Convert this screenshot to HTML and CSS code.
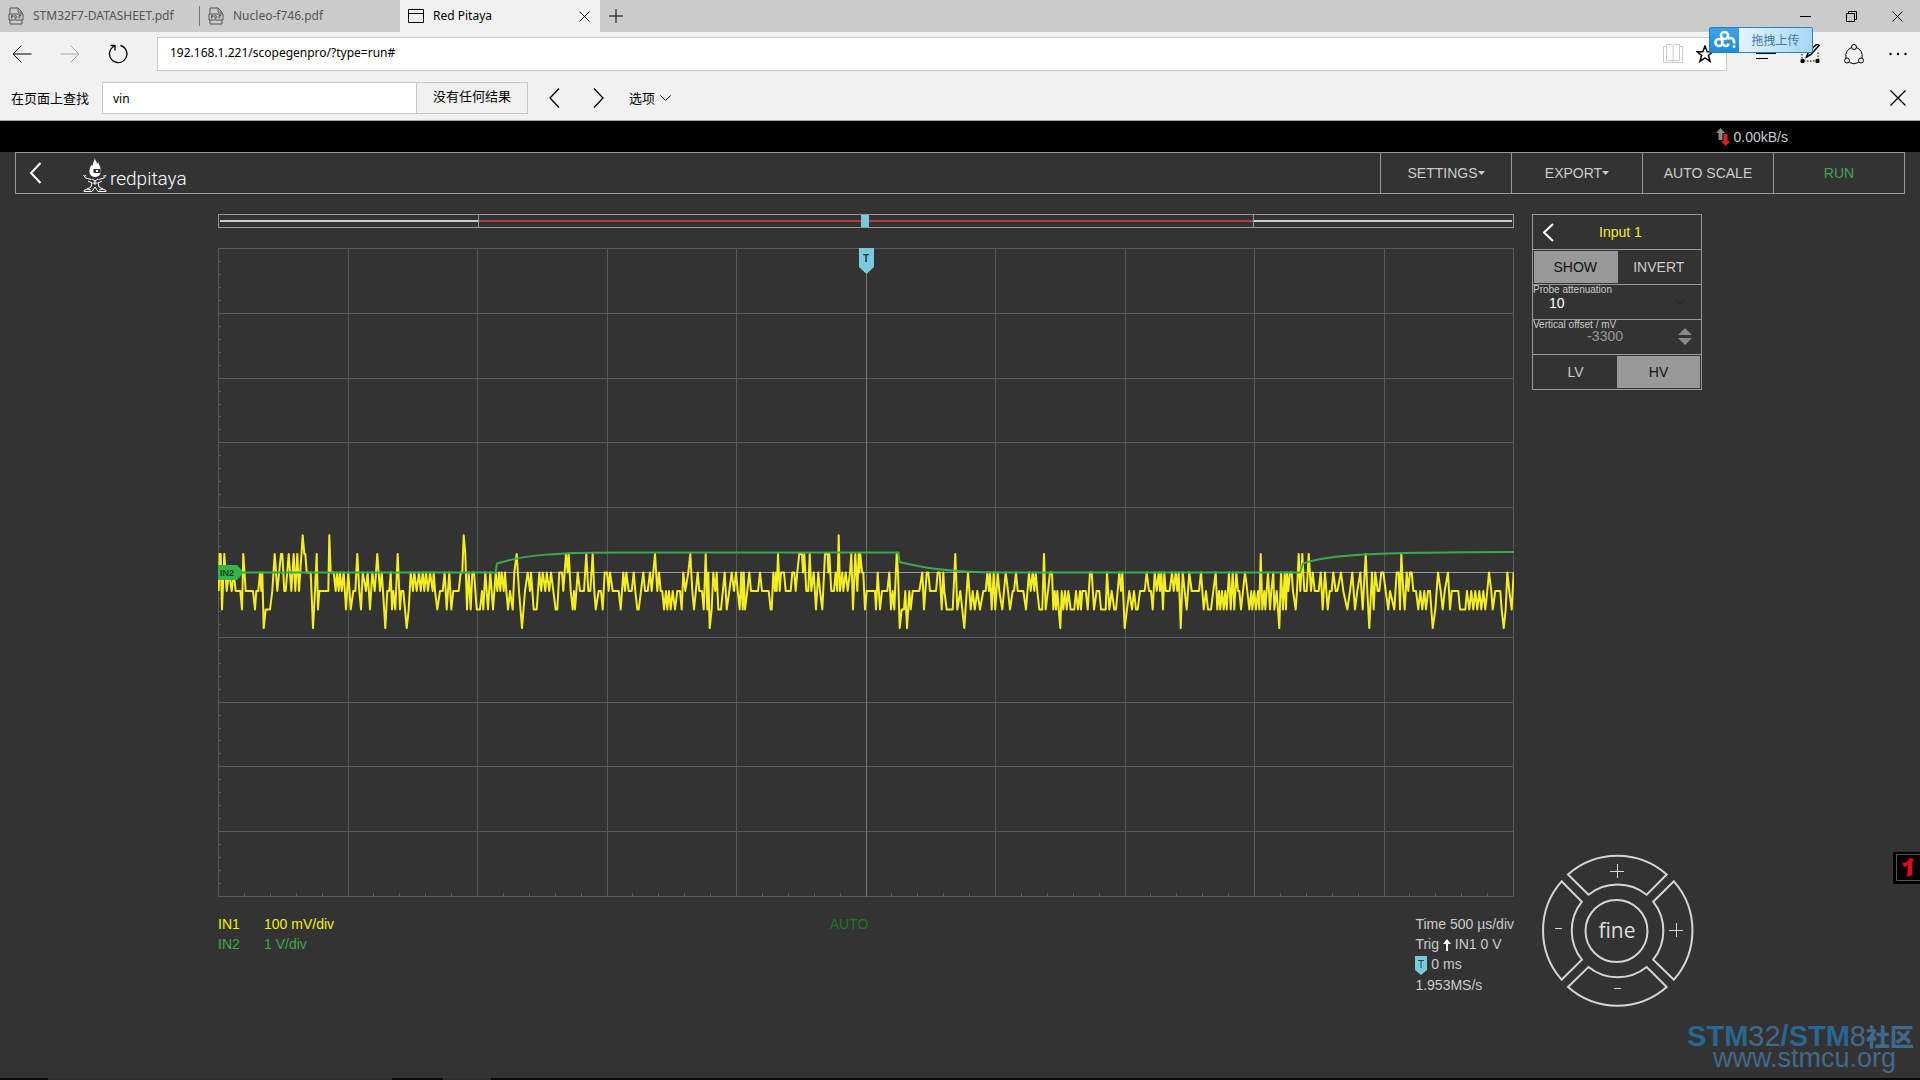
FILE: index.html
```html
<!DOCTYPE html>
<html lang="zh-CN">
<head>
    <meta charset="UTF-8">
    <meta name="viewport" content="width=device-width, initial-scale=1.0">
    <title>Red Pitaya</title>
    <link rel="stylesheet" href="styles.css">
</head>
<body>
    <div class="browser">
        <div class="tabs">
            <button class="tab">
                <svg class="icon" width="16" height="18" viewBox="0 0 16 18"><path d="M2 7V1h8l4 4v2M2 13v4h12v-4M10 1v4h4M1 7h14v6H1z"/><path d="M3.500 11.500v-3h1.500v1.500h-1.500M7 8.500v3c2.500 0 2.500-3 0-3M11 11.500v-3h2M11 10h1.500"/></svg>
                <span>STM32F7-DATASHEET.pdf</span>
            </button>
            <button class="tab">
                <svg class="icon" width="16" height="18" viewBox="0 0 16 18"><path d="M2 7V1h8l4 4v2M2 13v4h12v-4M10 1v4h4M1 7h14v6H1z"/><path d="M3.500 11.500v-3h1.500v1.500h-1.500M7 8.500v3c2.500 0 2.500-3 0-3M11 11.500v-3h2M11 10h1.500"/></svg>
                <span>Nucleo-f746.pdf</span>
            </button>
            <button class="tab active">
                <svg class="icon" width="16" height="14" viewBox="0 0 16 14"><path d="M.5.500h15v13H.5zM.5 4.500h15"/></svg>
                <span>Red Pitaya</span>
                <svg class="icon tab-close" width="11" height="11" viewBox="0 0 11 11"><path d="M.5.500l10 10M10.500.500l-10 10"/></svg>
            </button>
            <button class="new-tab" aria-label="New tab"><svg class="icon" width="14" height="14" viewBox="0 0 14 14"><path d="M7 0v14M0 7h14"/></svg></button>
            <div class="window-buttons">
                <button aria-label="Minimize"><svg class="icon" width="11" height="11" viewBox="0 0 11 11"><path d="M0 5.500h11"/></svg></button>
                <button aria-label="Restore"><svg class="icon" width="11" height="11" viewBox="0 0 11 11"><path d="M.5 2.500h8v8h-8zM2.500 2.500v-2h8v8h-2"/></svg></button>
                <button aria-label="Close"><svg class="icon" width="11" height="11" viewBox="0 0 11 11"><path d="M.5.500l10 10M10.500.500l-10 10"/></svg></button>
            </div>
        </div>

        <div class="nav">
            <button class="nav-btn" aria-label="Back"><svg class="icon" width="20" height="18" viewBox="0 0 20 18"><path d="M9.500.500L1 9l8.500 8.500M1 9h18.500"/></svg></button>
            <button class="nav-btn" aria-label="Forward" disabled><svg class="icon" width="20" height="18" viewBox="0 0 20 18"><path d="M10.500.500L19 9l-8.500 8.500M19 9H.5"/></svg></button>
            <button class="nav-btn" aria-label="Refresh"><svg class="icon" width="20" height="20" viewBox="0 0 20 20"><path stroke-width="1.300" d="M12.500 1.500a8.700 8.700 0 1 1-6 .5M2.500 1.500h4.500v5"/></svg></button>
            <div class="address">
                <input type="text" aria-label="Address" value="192.168.1.221/scopegenpro/?type=run#">
                <button class="reader" aria-label="Reading view"><svg class="icon" width="20" height="20" viewBox="0 0 20 20"><path d="M.5 2.500h3v-2h5.500l1 1 1-1h5.500v2h3v16H.5zM3.500 2.500v14h13v-14M10 1.500V18"/></svg></button>
                <button aria-label="Favorite"><svg class="icon" width="18" height="18" viewBox="0 0 18 18"><path stroke-width="1.500" d="M9 1l2.200 5.700H17l-4.600 3.700 1.700 6L9 12.900l-5.100 3.500 1.700-6L1 6.700h5.800z"/></svg></button>
            </div>
            <div class="nav-tools">
                <button aria-label="Hub"><svg class="icon" width="20" height="20" viewBox="0 0 20 20"><path d="M0 4.500h20M0 9.500h20M0 14.500h12"/></svg></button>
                <button aria-label="Web note"><svg class="icon" width="20" height="20" viewBox="0 0 20 20"><path stroke-dasharray="1.500 1.500" d="M2 4v13h16V7"/><path fill="currentColor" d="M1 15.500h3v3H1zM16 15.500h3v3h-3z"/><path stroke-width="1.500" d="M6.500 13l2-5L17 0l2 1.500-8 9z"/></svg></button>
                <button aria-label="Share"><svg class="icon" width="20" height="21" viewBox="0 0 20 21"><circle cx="10" cy="3" r="2.500"/><circle cx="3" cy="16.500" r="2.500"/><circle cx="17" cy="16.500" r="2.500"/><path d="M7.500 3.500A9 9 0 0 0 2 14M12.500 3.500A9 9 0 0 1 18 14M5.500 18.500a9 9 0 0 0 9 0"/></svg></button>
                <button aria-label="More"><svg class="icon dots" width="18" height="4" viewBox="0 0 18 4"><circle cx="1.500" cy="2" r="1.200"/><circle cx="9" cy="2" r="1.200"/><circle cx="16.500" cy="2" r="1.200"/></svg></button>
            </div>
            <button class="upload">
                <svg width="29" height="24" viewBox="0 0 29 24"><g fill="none" stroke="#fff" stroke-width="2.600"><circle cx="14.500" cy="7.500" r="3.500"/><circle cx="9" cy="14.500" r="3.500"/><path d="M13 16c1.500 3 5 2.500 5.500-.5M17.500 10.500c4-1.500 7 0 6.500 5"/></g><circle cx="24" cy="18.500" r="1.400" fill="#fff"/></svg>
                <span>拖拽上传</span>
            </button>
        </div>

        <div class="find">
            <label for="find-text">在页面上查找</label>
            <input type="text" id="find-text" value="vin">
            <span class="find-result">没有任何结果</span>
            <button class="find-btn" aria-label="Previous"><svg class="icon" width="11" height="20" viewBox="0 0 11 20"><path stroke-width="1.300" d="M10 .5L1 10l9 9.500"/></svg></button>
            <button class="find-btn" aria-label="Next"><svg class="icon" width="11" height="20" viewBox="0 0 11 20"><path stroke-width="1.300" d="M1 .5l9 9.500-9 9.500"/></svg></button>
            <button class="find-options">选项 <svg class="icon" width="11" height="6" viewBox="0 0 11 6"><path d="M.5.500l5 5 5-5"/></svg></button>
            <button class="find-close" aria-label="Close"><svg class="icon" width="16" height="16" viewBox="0 0 16 16"><path stroke-width="1.300" d="M.5.500l15 15M15.500.500l-15 15"/></svg></button>
        </div>
    </div>

    <div class="speed">
        <svg width="14" height="18" viewBox="0 0 14 18"><path fill="#888" d="M4.500 0L9 5H6.500v7h-4V5H0z"/><path fill="#e02020" d="M7.500 6h4v7H14l-4.500 5L5 13h2.500z"/></svg>
        <span>0.00kB/s</span>
    </div>

    <header class="menu">
        <a class="back" href="#" aria-label="Back"><svg width="13" height="22" viewBox="0 0 13 22"><path d="M11.500 1L2 11l9.500 10"/></svg></a>
        <a class="logo" href="#">
            <svg width="24" height="34" viewBox="0 0 24 34">
                <path fill="#fff" d="M12 0c0 3 2 3 2 6l1.500-2c0 3 2 4 2 7 1 5-1.500 8-5.500 8s-6-3-5.500-7c0-2 1.500-3 1.500-5l1.500 1c0-3 2-5 2.500-8z"/>
                <path fill="#333" d="M10.500 11h7v4h-7z"/><path fill="#fff" d="M13 12h2v2h-2z"/>
                <path fill="none" stroke="#fff" d="M.5 17l2 3 6 1.500M23 17l-2 3-5.500 1.500M2 17l1 1.500M21.500 17l-1 1.500M5 23l4 2-1 4-7 3.500v1h8l3-4.500 3 4.500h8v-1L16 29l-1-4 4-2M9 21l3 2 3-2M12 23v4M9.500 25h5M4 31l4 1M20 31l-4 1"/>
            </svg>
            <span>redpitaya</span>
        </a>
        <button class="menu-btn">SETTINGS<svg width="7" height="4" viewBox="0 0 7 4"><path d="M0 0h7L3.500 4z"/></svg></button>
        <button class="menu-btn">EXPORT<svg width="7" height="4" viewBox="0 0 7 4"><path d="M0 0h7L3.500 4z"/></svg></button>
        <button class="menu-btn">AUTO SCALE</button>
        <button class="menu-btn run">RUN</button>
    </header>

    <main class="scope">
        <section class="plot">
            <div class="buffer">
                <div class="buffer-window"></div>
                <div class="buffer-pos"></div>
            </div>

            <svg class="graph" viewBox="0 0 1296 649">
                <g id="grid" shape-rendering="crispEdges"></g>
                <path class="axis-x" d="M0 324.500h1296"/>
                <path class="axis-y" d="M648.500 0v649"/>
                <polyline id="in1" class="in1-line"/>
                <path class="in2-line" d="M0 324.500H277.500L279 315.500C305 307 340 304 412 304.500H680.500L681.500 314C705 320 735 324.500 780 324.500H1082L1085 315.500C1110 307 1150 304 1296 304"/>
                <path class="in2-tag" d="M0 317h19l7 7.500-7 7.500H0z"/>
                <text class="in2-text" x="2" y="328">IN2</text>
                <path class="trig-tag" d="M641 0h15v19l-7.500 7L641 19z"/>
                <text class="trig-text" x="648" y="14">T</text>
            </svg>

            <div class="info">
                <div class="channels">
                    <div class="in1"><span>IN1</span>100 mV/div</div>
                    <div class="in2"><span>IN2</span>1 V/div</div>
                </div>
                <div class="mode">AUTO</div>
                <div class="timing">
                    <div>Time 500 µs/div</div>
                    <div>Trig <svg width="8" height="12" viewBox="0 0 8 12"><path fill="#fff" d="M4 0l4 5H5v7H3V5H0z"/></svg> IN1 0 V</div>
                    <div><svg width="12" height="19" viewBox="0 0 12 19"><path fill="#77cbdd" d="M0 0h12v14l-6 5-6-5z"/><path stroke="#245" d="M3 4.500h6M6 4.500V12"/></svg> 0 ms</div>
                    <div>1.953MS/s</div>
                </div>
            </div>
        </section>

        <aside class="side">
            <form class="panel">
                <div class="panel-title">
                    <button type="button" aria-label="Back"><svg width="11" height="19" viewBox="0 0 11 19"><path d="M10 1L1 9.500l9 8.500"/></svg></button>
                    <h2>Input 1</h2>
                </div>
                <div class="panel-row">
                    <button type="button" class="on">SHOW</button>
                    <button type="button">INVERT</button>
                </div>
                <div class="panel-field">
                    <label for="probe">Probe attenuation</label>
                    <select id="probe"><option>1</option><option selected>10</option></select>
                    <svg class="arrow" width="10" height="6" viewBox="0 0 10 6"><path d="M0 0l5 5 5-5"/></svg>
                </div>
                <div class="panel-field">
                    <label for="offset">Vertical offset / mV</label>
                    <input type="text" id="offset" value="-3300">
                    <svg class="spin" width="14" height="17" viewBox="0 0 14 17"><path d="M7 0l7 7H0zM7 17l7-7H0z"/></svg>
                </div>
                <div class="panel-row">
                    <button type="button">LV</button>
                    <button type="button" class="on">HV</button>
                </div>
            </form>

            <div class="wheel">
                <svg class="wheel-art" viewBox="0 0 150 151">
                    <path d="M26 19.500A74.500 74.500 0 0 1 124.700 19.500L104.700 39.700A46.500 46.500 0 0 0 46.500 39.700z"/>
                    <path d="M131.900 26.300A74.500 74.500 0 0 1 131.900 124.700L111.200 104.700A46.500 46.500 0 0 0 111.200 46.700z"/>
                    <path d="M26 132A74.500 74.500 0 0 0 124.700 132L104.700 112A46.500 46.500 0 0 1 46.500 112z"/>
                    <path d="M19.600 26.300A74.500 74.500 0 0 0 19.600 124.700L39.900 104.700A46.500 46.500 0 0 1 39.900 46.700z"/>
                    <circle cx="74.500" cy="76" r="31"/>
                </svg>
                <button class="up" aria-label="Scale Y up"><svg width="14" height="14" viewBox="0 0 14 14"><path d="M7.500 0v14M0 7.500h14"/></svg></button>
                <button class="left" aria-label="Scale X down"><svg width="7" height="5" viewBox="0 0 7 5"><path d="M0 1.500h7"/></svg></button>
                <button class="fine">fine</button>
                <button class="right" aria-label="Scale X up"><svg width="14" height="14" viewBox="0 0 14 14"><path d="M7.500 0v14M0 7.500h14"/></svg></button>
                <button class="down" aria-label="Scale Y down"><svg width="7" height="5" viewBox="0 0 7 5"><path d="M0 2.500h7"/></svg></button>
            </div>
        </aside>
    </main>

    <footer class="watermark">
        <div class="watermark-name"><b>STM</b>32<b>/STM</b>8<b class="cn">社区</b></div>
        <div class="watermark-url">www.stmcu.org</div>
    </footer>

    <div class="taskbar"><span></span><span></span></div>

    <div class="counter">
        <svg width="27" height="32" viewBox="0 0 27 32"><path fill="#000" d="M0 0h27v32H0z"/><path fill="none" stroke="#555" d="M27 2.500H3.500v26H27"/><path fill="#f00610" d="M9 11c4 0 6-2 8-5l4 1-2 3v13l-5 2 1-12-4 2z"/></svg>
    </div>

    <script src="script.js"></script>
</body>
</html>
```
FILE: styles.css
```css
:root {
    --fundal: #333;
    --bar: #f1f1f1;
    --line: #999;
    --text: #ccc;
    --galben: #f5ee1e;
    --verde: #3ea84f;
    --cyan: #77cbdd;
}

* {
    box-sizing: border-box;
}

body {
    margin: 0;
    min-height: 100vh;
    display: flex;
    flex-direction: column;
    background: var(--fundal);
    color: var(--text);
    font: 14px/20px "Liberation Sans", Arial, sans-serif;
}

button, input, select {
    font: inherit;
    color: inherit;
    background: none;
    border: none;
    border-radius: 0;
    padding: 0;
    margin: 0;
}

button {
    display: flex;
    align-items: center;
    justify-content: center;
}

a {
    color: inherit;
    text-decoration: none;
}

svg {
    flex: none;
}

/* browser chrome */
.browser {
    background: var(--bar);
    color: #000;
    font: 12px/18px "Noto Sans", "Noto Sans CJK SC", sans-serif;
    border-bottom: 1px solid #aaa;
}

.icon {
    fill: none;
    stroke: currentColor;
}

.tabs {
    display: flex;
    height: 32px;
    background: #cbcbcb;
}

.tab {
    width: 200px;
    padding: 0 10px 0 8px;
    gap: 9px;
    justify-content: flex-start;
    color: #555;
}

.tab:first-child {
    background: linear-gradient(#777, #777) right center / 1px 20px no-repeat;
}

.tab.active {
    background: var(--bar);
    color: #000;
}

.tab-close {
    margin-left: auto;
}

.new-tab {
    width: 32px;
}

.window-buttons {
    display: flex;
    margin-left: auto;
}

.window-buttons button {
    width: 46px;
}

.nav {
    position: relative;
    display: flex;
    align-items: center;
    padding-top: 5px;
}

.nav-btn {
    width: 48px;
    padding-right: 4px;
}

.nav-btn:disabled {
    color: #aaa;
}

.address {
    flex: 1;
    display: flex;
    height: 34px;
    margin-left: 13px;
    padding: 0 5px 0 12px;
    background: #fff;
    border: 1px solid #c8c8c8;
}

.address input {
    flex: 1;
    height: 28px;
}

.address button {
    width: 32px;
}

.address .reader {
    color: #ccc;
}

.nav-tools {
    display: flex;
    padding-left: 17px;
}

.nav-tools button {
    width: 44px;
    height: 34px;
}

.dots {
    fill: currentColor;
    stroke: none;
}

.upload {
    position: absolute;
    right: 107px;
    top: -5px;
    width: 104px;
    height: 26px;
    border: 1px solid #2b7fbd;
    border-radius: 2px;
    background: linear-gradient(#3ba3ea, #1f8edb);
    color: #47759b;
    font-family: "Noto Sans CJK SC", sans-serif;
}

.upload span {
    flex: 1;
    line-height: 24px;
    background: linear-gradient(100deg, #e4f5ff, #a4d6f7);
}

.find {
    display: flex;
    align-items: center;
    padding: 11px 14px 6px 11px;
    font-size: 13px;
}

.find input {
    width: 315px;
    height: 32px;
    margin-left: 13px;
    padding: 0 10px;
    font-size: 12px;
    background: #fff;
    border: 1px solid #c8c8c8;
}

.find-result {
    width: 111px;
    height: 32px;
    line-height: 26px;
    text-align: center;
    border: 1px solid #c8c8c8;
    border-left: none;
}

.find-btn {
    width: 44px;
    height: 32px;
}

.find-result + .find-btn {
    margin-left: 4px;
}

.find-options {
    margin-left: 9px;
    gap: 5px;
}

.find-close {
    margin-left: auto;
}

/* network speed strip */
.speed {
    display: flex;
    justify-content: flex-end;
    align-items: center;
    gap: 4px;
    height: 31px;
    padding-right: 132px;
    background: #000;
}

/* scope header */
.menu {
    display: flex;
    height: 42px;
    margin: 0 15px;
    border: 1px solid var(--line);
}

.back, .logo {
    display: flex;
    align-items: center;
}

.back {
    padding-left: 13px;
    fill: none;
    stroke: #fff;
    stroke-width: 2;
}

.logo {
    margin-left: 41px;
    margin-right: auto;
    gap: 3px;
    color: #fff;
    font: 300 19px/22px Roboto, sans-serif;
    padding-top: 4px;
}

.logo span {
    padding-top: 8px;
}

.menu-btn {
    width: 131px;
    border-left: 1px solid var(--line);
}

.menu-btn svg {
    fill: currentColor;
}

.menu-btn.run {
    color: var(--verde);
}

/* graph and side panel */
.scope {
    display: grid;
    grid-template-columns: minmax(0, 1fr) 170px;
    gap: 18px;
    padding: 20px 218px 0;
}

.buffer {
    position: relative;
    height: 14px;
    margin-bottom: 20px;
    border: 1px solid var(--line);
    background: linear-gradient(#ccc, #ccc) center / calc(100% - 2px) 2px no-repeat;
}

.buffer-window {
    height: 12px;
    margin: 0 20%;
    border: solid var(--line);
    border-width: 0 1px;
    background: linear-gradient(#b04040, #b04040) center / 100% 2px no-repeat, var(--fundal);
}

.buffer-pos {
    position: absolute;
    top: 0;
    left: calc(50% - 5px);
    width: 8px;
    height: 12px;
    background: var(--cyan);
}

.graph {
    display: block;
    width: 100%;
}

.grid-line {
    stroke: #5a5a5a;
}

.axis-x {
    stroke: #999;
}

.axis-y {
    stroke: #777;
}

.in1-line, .in2-line {
    fill: none;
    stroke-width: 2;
    stroke-linejoin: round;
}

.in1-line {
    stroke: var(--galben);
}

.in2-line {
    stroke: var(--verde);
}

.in2-tag {
    fill: #34b44a;
}

.in2-text {
    font: bold 9px "Liberation Sans", Arial, sans-serif;
    fill: #16401d;
}

.trig-tag {
    fill: var(--cyan);
}

.trig-text {
    font: bold 10px "Liberation Sans", Arial, sans-serif;
    text-anchor: middle;
    fill: #234;
}

.info {
    display: grid;
    grid-template-columns: 1fr auto 1fr;
    padding: 17px 0 10px;
}

.channels span {
    display: inline-block;
    width: 46px;
}

.in1 {
    color: var(--galben);
}

.in2 {
    color: var(--verde);
}

.mode {
    padding-right: 34px;
    color: #1c7a1c;
}

.timing {
    justify-self: end;
}

.timing svg {
    vertical-align: middle;
}

.side {
    display: flex;
    flex-direction: column;
    justify-content: space-between;
}

.panel {
    border: 1px solid var(--line);
}

.panel > div {
    height: 35px;
    border-bottom: 1px solid var(--line);
}

.panel > div:last-child {
    height: 34px;
    border-bottom: none;
}

.panel-title {
    display: flex;
    align-items: center;
}

.panel-title button {
    padding-left: 10px;
    fill: none;
    stroke: #fff;
    stroke-width: 2;
}

.panel-title h2 {
    flex: 1;
    margin: 0;
    padding-right: 14px;
    text-align: center;
    font: inherit;
    color: var(--galben);
}

.panel-row {
    display: flex;
    padding: 1px;
}

.panel-row button {
    flex: 1;
}

.panel-row .on {
    background: #999;
    color: #111;
}

.panel-row .on + button {
    border-left: 1px solid var(--line);
}

.panel-field {
    position: relative;
}

.panel-field label {
    display: block;
    font-size: 10px;
    line-height: 10px;
}

.panel-field select {
    appearance: none;
    display: block;
    width: 100%;
    padding-left: 16px;
    line-height: 16px;
    color: #fff;
}

.panel-field select option {
    background: var(--fundal);
}

.panel-field input {
    display: block;
    width: 90px;
    height: 12px;
    text-align: right;
    line-height: 12px;
    color: #999;
}

.arrow, .spin {
    position: absolute;
}

.arrow {
    right: 16px;
    top: 14px;
    fill: none;
    stroke: #222;
}

.spin {
    right: 9px;
    top: 8px;
    fill: #888;
}

.wheel {
    position: relative;
    display: grid;
    grid-template: 33px 84px 33px / 33px 84px 33px;
    width: 150px;
    margin: 0 auto;
    stroke: #d5d5d5;
}

.wheel-art {
    position: absolute;
    inset: 0;
    fill: none;
    stroke-width: 2;
    overflow: visible;
}

.wheel button {
    position: relative;
}

.up, .down {
    grid-column: 2;
}

.left {
    grid-column: 1;
}

.wheel .fine {
    color: #ddd;
    font: 21px/30px "Open Sans", sans-serif;
    stroke: none;
}

/* watermark */
.watermark {
    margin-top: auto;
    padding: 0 6px 10px 0;
    align-self: flex-end;
    color: #41698a;
    font-size: 29px;
    line-height: 24px;
}

.watermark b {
    color: #28678f;
}

.watermark .cn {
    font: 900 24px/24px "Noto Sans CJK SC", sans-serif;
    color: #41698a;
}

.watermark-url {
    padding-right: 18px;
    text-align: right;
    font-size: 27px;
    line-height: 20px;
}

.taskbar {
    display: flex;
    height: 2px;
    padding-left: 48px;
    gap: 51px;
    background: #0a0a0a;
}

.taskbar span {
    width: 344px;
    background: #2c2c2c;
}

.taskbar span + span {
    width: 48px;
}

.counter {
    position: absolute;
    right: 0;
    top: 852px;
    height: 32px;
}
```
FILE: script.js
```javascript
// IN1 samples, "x:level", x in thirds of a graph pixel from the block start
const blocks = [
    {
        start: -54,
        samples: '56:3 59:1 62:1 66:4 73:1 80:3 87:2 95:3 101:2 107:3 121:3 126:4 130:1 137:3 159:3 165:4 169:3 175:3 180:2 184:3 187:2 191:5 197:4 210:4 217:3 224:1 232:3 243:1 247:1 253:3 257:3 266:1 274:3 281:1 286:3 292:1 297:3 308:0 313:1 316:1 320:2 332:2 339:5 345:3 350:1 354:4 358:3 385:3 388:0 392:2 401:2 407:3 411:2 416:3 420:2 425:3 431:2 438:4 445:2 452:4 460:3 466:3 472:1 478:3 483:4 488:2 498:3 503:2 510:4 517:2 524:3 532:1 540:3 545:2 549:3 556:5 562:3 568:3 572:2 576:4 580:3 586:4 593:1 600:4 604:3 610:3 620:5 626:4 632:2 639:3 643:2 650:3 657:2 662:3 668:2 673:3 678:2 684:3 690:2 698:3 701:2 705:3 712:4 720:3 728:3 734:2 740:4 748:2 754:4 760:3 776:3 782:2 787:2 791:0 796:1 801:4 806:2 812:4 817:2 822:2 830:4 840:4 846:3 850:4 856:2 864:4 871:2 879:4 887:2 892:3 897:2 901:3 905:2 911:3 915:2 919:3 924:4 930:3 938:4 943:2 950:1 957:3 966:5 975:3 983:2 990:3 993:2 1001:4 1010:4 1018:2 1024:3 1028:2 1036:3 1040:2 1048:3 1053:2 1060:3 1067:4 1072:4 1078:2 1086:2 1090:3 1098:1 1103:2 1106:1 1112:3 1118:4 1122:3 1125:4 1133:2 1140:3 1152:3 1159:1 1165:3 1171:3 1178:1 1183:3 1187:4 1196:3 1203:3 1208:4 1214:2 1221:2 1226:3 1230:2 1238:3 1256:3 1262:4 1270:2 1275:3 1279:2 1286:3'
    },
    {
        start: 1236,
        samples: '0:3 5:3 11:2 16:3 22:4 26:4 33:3 40:2 45:3 53:3 60:2 65:3 70:2 75:1 82:3 87:2 92:3 97:3 102:4 108:3 112:4 117:3 122:4 128:3 135:4 142:3 150:3 155:4 160:2 166:3 175:2 181:1 187:3 192:4 203:2 208:3 216:3 221:4 227:1 232:4 235:2 239:5 245:4 250:2 256:3 260:2 265:4 273:4 284:2 290:4 298:3 305:2 312:3 318:2 323:3 329:4 334:2 338:4 341:2 345:4 352:3 358:2 363:3 384:3 390:2 396:3 416:3 422:4 425:4 430:2 435:3 438:2 440:3 444:1 449:3 453:2 462:2 467:3 482:3 487:2 493:2 497:3 502:2 508:1 516:1 519:2 523:1 529:3 535:3 539:1 544:3 551:2 558:4 565:2 570:3 577:4 585:1 593:1 595:2 598:1 604:3 612:3 617:2 622:3 626:0 630:3 637:2 640:3 647:2 653:3 660:2 664:1 669:4 676:1 682:3 686:1 688:2 691:1 696:2 700:2 705:4 710:3 735:3 738:4 743:2 750:4 756:3 772:3 778:2 783:4 788:3 793:4 800:1 804:2 809:5 815:4 822:4 826:3 831:5 838:3 842:4 848:3 868:3 877:2 882:4 890:2 895:2 900:3 918:3 923:2 929:2 935:4 940:2 943:3 950:4 968:4 976:1 982:4 991:3 1003:5 1014:2 1022:4 1028:3 1034:4 1042:3 1050:4 1060:3 1067:3 1072:2 1077:3 1080:2 1085:4 1091:2 1096:4 1103:2 1108:3 1117:4 1127:2 1134:3 1140:4 1148:3 1152:3 1158:2 1163:3 1180:3 1188:4 1197:2 1202:3 1208:2 1213:3 1217:2 1222:3 1228:4 1237:4 1242:1 1247:4 1254:3 1260:2 1266:2 1270:4 1274:3 1278:4 1282:3 1286:4'
    },
    {
        start: 2526,
        samples: '1:5 5:3 10:4 15:3 20:4 25:3 32:4 43:4 48:3 54:4 60:3 63:4 67:3 77:3 83:4 90:2 95:2 102:4 110:3 118:3 123:4 137:4 141:2 148:4 155:3 163:4 168:4 173:3 178:2 183:3 187:2 194:5 201:4 208:3 216:4 222:3 228:4 233:4 240:3 254:3 260:2 267:3 273:3 278:4 284:2 290:3 296:2 300:3 304:2 309:4 313:2 317:3 329:3 336:2 341:3 347:2 352:3 356:2 362:5 368:2 374:3 380:4 388:2 395:3 417:3 423:2 431:4 438:3 444:4 453:4 460:3 467:2 472:4 477:3 481:4 486:3 491:4 496:3 500:4 507:2 512:4 518:2 523:4 529:2 534:3 538:3 543:4 555:2 562:3 568:4 574:3 577:4 583:3 588:4 594:3 598:4 602:1 607:4 613:3 616:4 624:2 630:4 634:3 640:2 643:4 650:3 658:5 663:2 669:4 674:2 678:4 681:2 685:3 690:2 695:2 699:3 707:4 711:3 716:1 721:3 727:1 733:3 740:3 746:1 753:3 758:2 764:3 776:3 782:2 788:4 795:2 803:4 809:3 815:3 820:2 827:3 832:3 843:2 850:3 862:4 870:3 877:2 885:4 892:3 901:2 908:4 917:1 922:3 928:5 936:2 941:4 946:2 953:3 958:3 964:2 970:2 977:3 985:4 990:3 1003:4 1010:2 1016:2 1020:4 1024:1 1030:3 1034:4 1040:2 1045:3 1050:2 1055:2 1060:3 1068:3 1075:4 1081:3 1087:4 1093:3 1098:4 1104:3 1110:3 1118:5 1126:4 1134:2 1142:3 1148:4 1154:3 1164:2 1170:4 1175:3 1195:3 1200:4 1216:4 1221:3 1228:4 1234:3 1240:4 1246:3 1252:4 1258:3 1264:4 1270:3 1276:4 1282:3 1287:2 1294:3 1298:4 1306:3 1321:3 1325:4 1331:5 1337:4 1342:2 1348:3 1355:4 1361:2'
    }
];

const points = [];
blocks.forEach(block => {
    block.samples.split(' ').forEach(sample => {
        const [x, level] = sample.split(':').map(Number);
        points.push(((x + block.start) / 3).toFixed(1) + ',' + (287.3 + level * 18.55).toFixed(1));
    });
});
document.getElementById('in1').setAttribute('points', points.join(' '));

// 10 x 10 divisions, five small ticks per division on the left and bottom edge
let d = '';
for (let i = 0; i <= 10; i++) {
    d += `M${Math.round(i * 129.5) + 0.5} 0v649M0 ${Math.round(i * 64.8) + 0.5}h1296`;
}
for (let i = 1; i < 50; i++) {
    d += `M${Math.round(i * 25.9) + 0.5} 645v4M0 ${Math.round(i * 12.96) + 0.5}h3`;
}
document.getElementById('grid').innerHTML = `<path class="grid-line" d="${d}"/>`;
```
